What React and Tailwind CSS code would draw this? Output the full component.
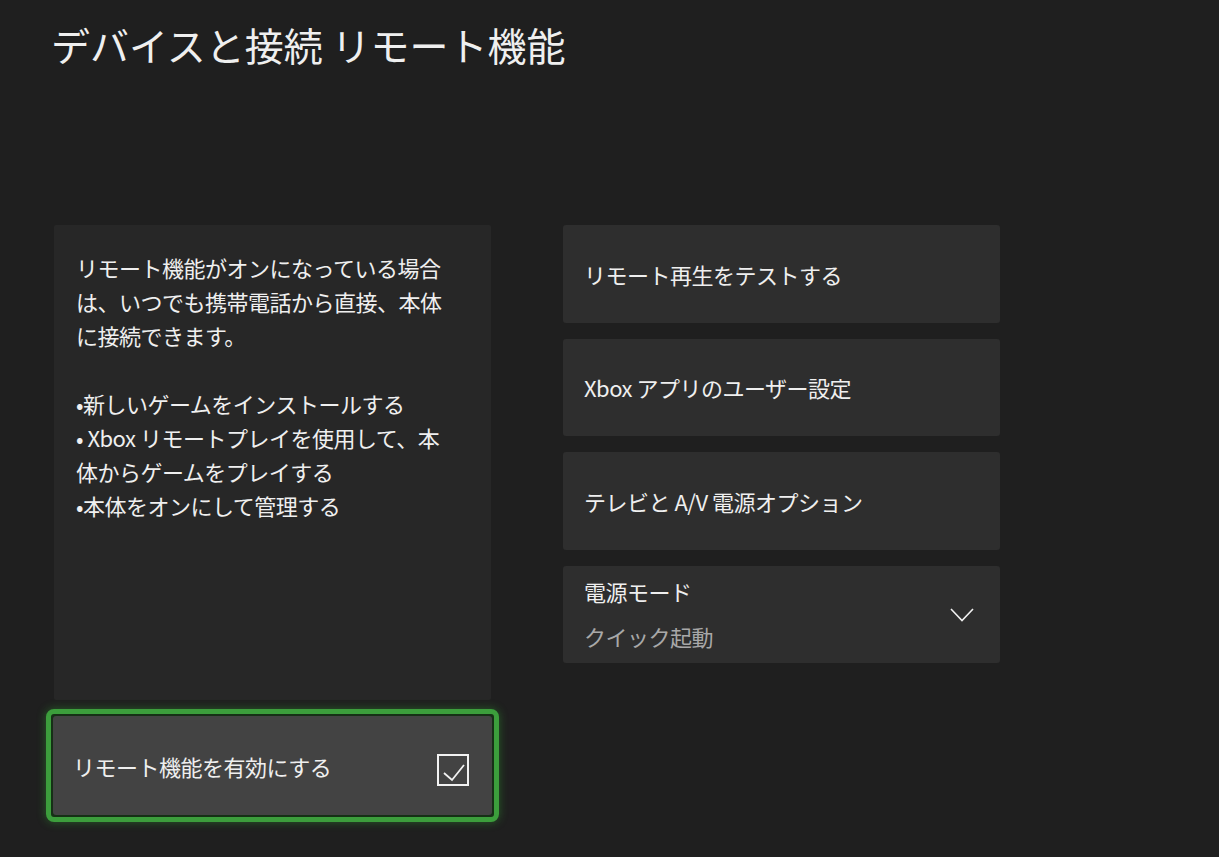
export default function App() {
  const font = { fontFamily: '"Noto Sans CJK JP", "Noto Sans", sans-serif' };
  return (
    <div
      className="w-full h-[857px] bg-[#1f1f1f] overflow-hidden text-[#efefef]"
      style={font}
    >
      <h1 className="pl-[51px] pt-[20px] text-[39px] leading-[48px] font-normal">
        デバイスと接続 リモート機能
      </h1>

      <div className="mt-[157px] flex">
        {/* Left column */}
        <div className="ml-[54px] w-[437px] flex flex-col">
          <div className="h-[475px] bg-[#272727] rounded-[2px] pl-[22px] pr-[10px] pt-[25px] text-[22px] leading-[34px] tracking-[-0.5px] whitespace-nowrap">
            <div>リモート機能がオンになっている場合</div>
            <div>は、いつでも携帯電話から直接、本体</div>
            <div>に接続できます。</div>
            <div className="h-[34px]" />
            <div>•新しいゲームをインストールする</div>
            <div>• Xbox リモートプレイを使用して、本</div>
            <div>体からゲームをプレイする</div>
            <div>•本体をオンにして管理する</div>
          </div>

          <div className="mt-[9px] -mx-[8px] h-[113px] rounded-[8px] border-[5px] border-[#3c9e3c] bg-[#163016] p-[2px] shadow-[0_0_10px_rgba(50,170,50,0.45)]">
            <div className="h-full rounded-[3px] bg-[#434343] flex items-center justify-between pl-[20px] pr-[23px]">
              <span className="text-[22px] leading-[34px] mt-[1px] tracking-[-0.5px]">リモート機能を有効にする</span>
              <svg width="32" height="32" viewBox="0 0 32 32" className="mt-[8px]">
                <rect x="1" y="1" width="30" height="30" fill="none" stroke="#f2f2f2" strokeWidth="2" />
                <polyline points="7,19 15,26 27,11" fill="none" stroke="#f2f2f2" strokeWidth="1.8" />
              </svg>
            </div>
          </div>
        </div>

        {/* Right column */}
        <div className="ml-[72px] w-[437px] flex flex-col gap-[16px] text-[22px] leading-[34px] tracking-[-0.5px]">
          <div className="h-[97.5px] bg-[#2e2e2e] rounded-[3px] flex items-center px-[21px]">
            リモート再生をテストする
          </div>
          <div className="h-[97.5px] bg-[#2e2e2e] rounded-[3px] flex items-center px-[21px]">
            Xbox アプリのユーザー設定
          </div>
          <div className="h-[97.5px] bg-[#2e2e2e] rounded-[3px] flex items-center px-[21px]">
            テレビと A/V 電源オプション
          </div>
          <div className="h-[97.5px] bg-[#2e2e2e] rounded-[3px] flex items-start justify-between pl-[21px] pr-[26px] pt-[8px]">
            <div>
              <div>電源モード</div>
              <div className="mt-[11px] text-[#a8a8a8]">クイック起動</div>
            </div>
            <svg width="24" height="14" viewBox="0 0 24 14" className="mt-[34px]">
              <polyline points="1,1 12,12.5 23,1" fill="none" stroke="#f0f0f0" strokeWidth="1.6" />
            </svg>
          </div>
        </div>
      </div>
    </div>
  );
}
